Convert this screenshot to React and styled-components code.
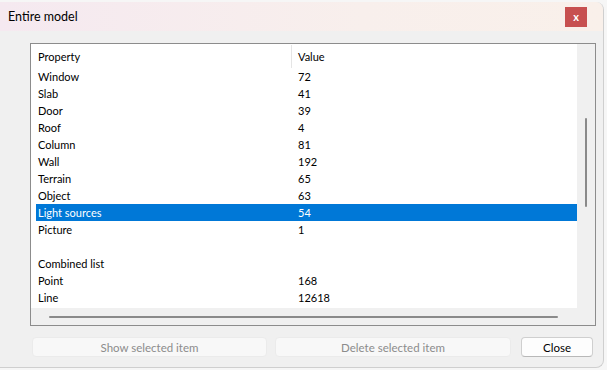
import React from "react"
import styled, { createGlobalStyle } from "styled-components"

const GlobalStyle = createGlobalStyle`
  html, body {
    margin: 0;
    padding: 0;
    background: #f6f6f6;
  }
  body {
    font-family: Lato, "Liberation Sans", sans-serif;
    font-size: 11px;
    color: #000;
  }
`

const Window = styled.div`
  width: 603px;
  height: 365px;
  margin-top: 2px;
  background: #f0f0f0;
  border-right: 1px solid #cfcfcf;
  border-bottom: 1px solid #cfcfcf;
  border-radius: 0 8px 8px 0;
  display: flex;
  flex-direction: column;
  overflow: hidden;
`

const TitleBar = styled.div`
  height: 29px;
  display: flex;
  align-items: center;
  justify-content: space-between;
  padding: 0 16px 0 8px;
  background: linear-gradient(to right, #f5e9f0, #f8efec 60%, #f9f0ea);
`

const Title = styled.span`
  font-size: 12.5px;
`

const CloseX = styled.div`
  width: 22px;
  height: 20px;
  background: #c75050;
  color: #fff;
  font-weight: bold;
  font-size: 11px;
  display: flex;
  align-items: center;
  justify-content: center;
  line-height: 1;
`

const Body = styled.div`
  flex: 1;
  padding: 12px 7px 0 30px;
  display: flex;
  flex-direction: column;
`

const ListBox = styled.div`
  width: 564px;
  height: 281px;
  border: 1px solid #8c8c8c;
  display: grid;
  grid-template-columns: 546px 18px;
  grid-template-rows: 264px 17px;
  background: #f0f0f0;
`

const Content = styled.div`
  background: #fff;
  overflow: hidden;
`

const HeaderRow = styled.div`
  height: 24px;
  display: grid;
  grid-template-columns: 256px 1fr;
  align-items: center;
  padding-left: 5px;
`

const HeaderCell = styled.div`
  height: 23px;
  display: flex;
  align-items: center;
  border-right: ${(p) => (p.$divider ? "1px solid #e5e5e5" : "none")};
  padding-left: ${(p) => (p.$second ? "6px" : "2px")};
`

const Row = styled.div`
  height: 17px;
  margin-left: 5px;
  display: grid;
  grid-template-columns: 260px 1fr;
  align-items: center;
  background: ${(p) => (p.$selected ? "#0078d7" : "transparent")};
  color: ${(p) => (p.$selected ? "#fff" : "#000")};
`

const Cell = styled.div`
  padding-left: 2px;
  white-space: nowrap;
`

const VTrack = styled.div`
  display: flex;
  justify-content: center;
`

const VThumb = styled.div`
  width: 2px;
  height: 89px;
  margin-top: 74px;
  margin-left: -1px;
  background: #8a8a8a;
  border-radius: 1px;
`

const HTrack = styled.div`
  display: flex;
  align-items: center;
  padding-left: 18px;
`

const HThumb = styled.div`
  width: 509px;
  height: 2px;
  background: #8a8a8a;
  border-radius: 1px;
`

const ButtonRow = styled.div`
  display: flex;
  margin-top: 11px;
  margin-left: 2px;
`

const Button = styled.button`
  width: ${(p) => p.$w}px;
  height: 20px;
  margin-right: ${(p) => p.$mr || 0}px;
  font-family: inherit;
  font-size: 11.5px;
  border-radius: 4px;
  padding: 0;
  background: ${(p) => (p.disabled ? "#f8f8f8" : "#fdfdfd")};
  border: 1px solid ${(p) => (p.disabled ? "#ebebeb" : "#cfcfcf")};
  border-bottom-color: ${(p) => (p.disabled ? "#ebebeb" : "#b8b8b8")};
  color: ${(p) => (p.disabled ? "#8c8c8c" : "#000")};
`

const rows = [
  ["Window", "72"],
  ["Slab", "41"],
  ["Door", "39"],
  ["Roof", "4"],
  ["Column", "81"],
  ["Wall", "192"],
  ["Terrain", "65"],
  ["Object", "63"],
  ["Light sources", "54"],
  ["Picture", "1"],
  ["", ""],
  ["Combined list", ""],
  ["Point", "168"],
  ["Line", "12618"],
]

export default function App() {
  return (
    <>
      <GlobalStyle />
      <Window>
        <TitleBar>
          <Title>Entire model</Title>
          <CloseX>x</CloseX>
        </TitleBar>
        <Body>
          <ListBox>
            <Content>
              <HeaderRow>
                <HeaderCell $divider>Property</HeaderCell>
                <HeaderCell $second>Value</HeaderCell>
              </HeaderRow>
              {rows.map(([name, value], i) => (
                <Row key={i} $selected={name === "Light sources"}>
                  <Cell>{name}</Cell>
                  <Cell>{value}</Cell>
                </Row>
              ))}
            </Content>
            <VTrack>
              <VThumb />
            </VTrack>
            <HTrack>
              <HThumb />
            </HTrack>
            <div />
          </ListBox>
          <ButtonRow>
            <Button disabled $w={235} $mr={8}>
              Show selected item
            </Button>
            <Button disabled $w={236} $mr={10}>
              Delete selected item
            </Button>
            <Button $w={72}>Close</Button>
          </ButtonRow>
        </Body>
      </Window>
    </>
  )
}
